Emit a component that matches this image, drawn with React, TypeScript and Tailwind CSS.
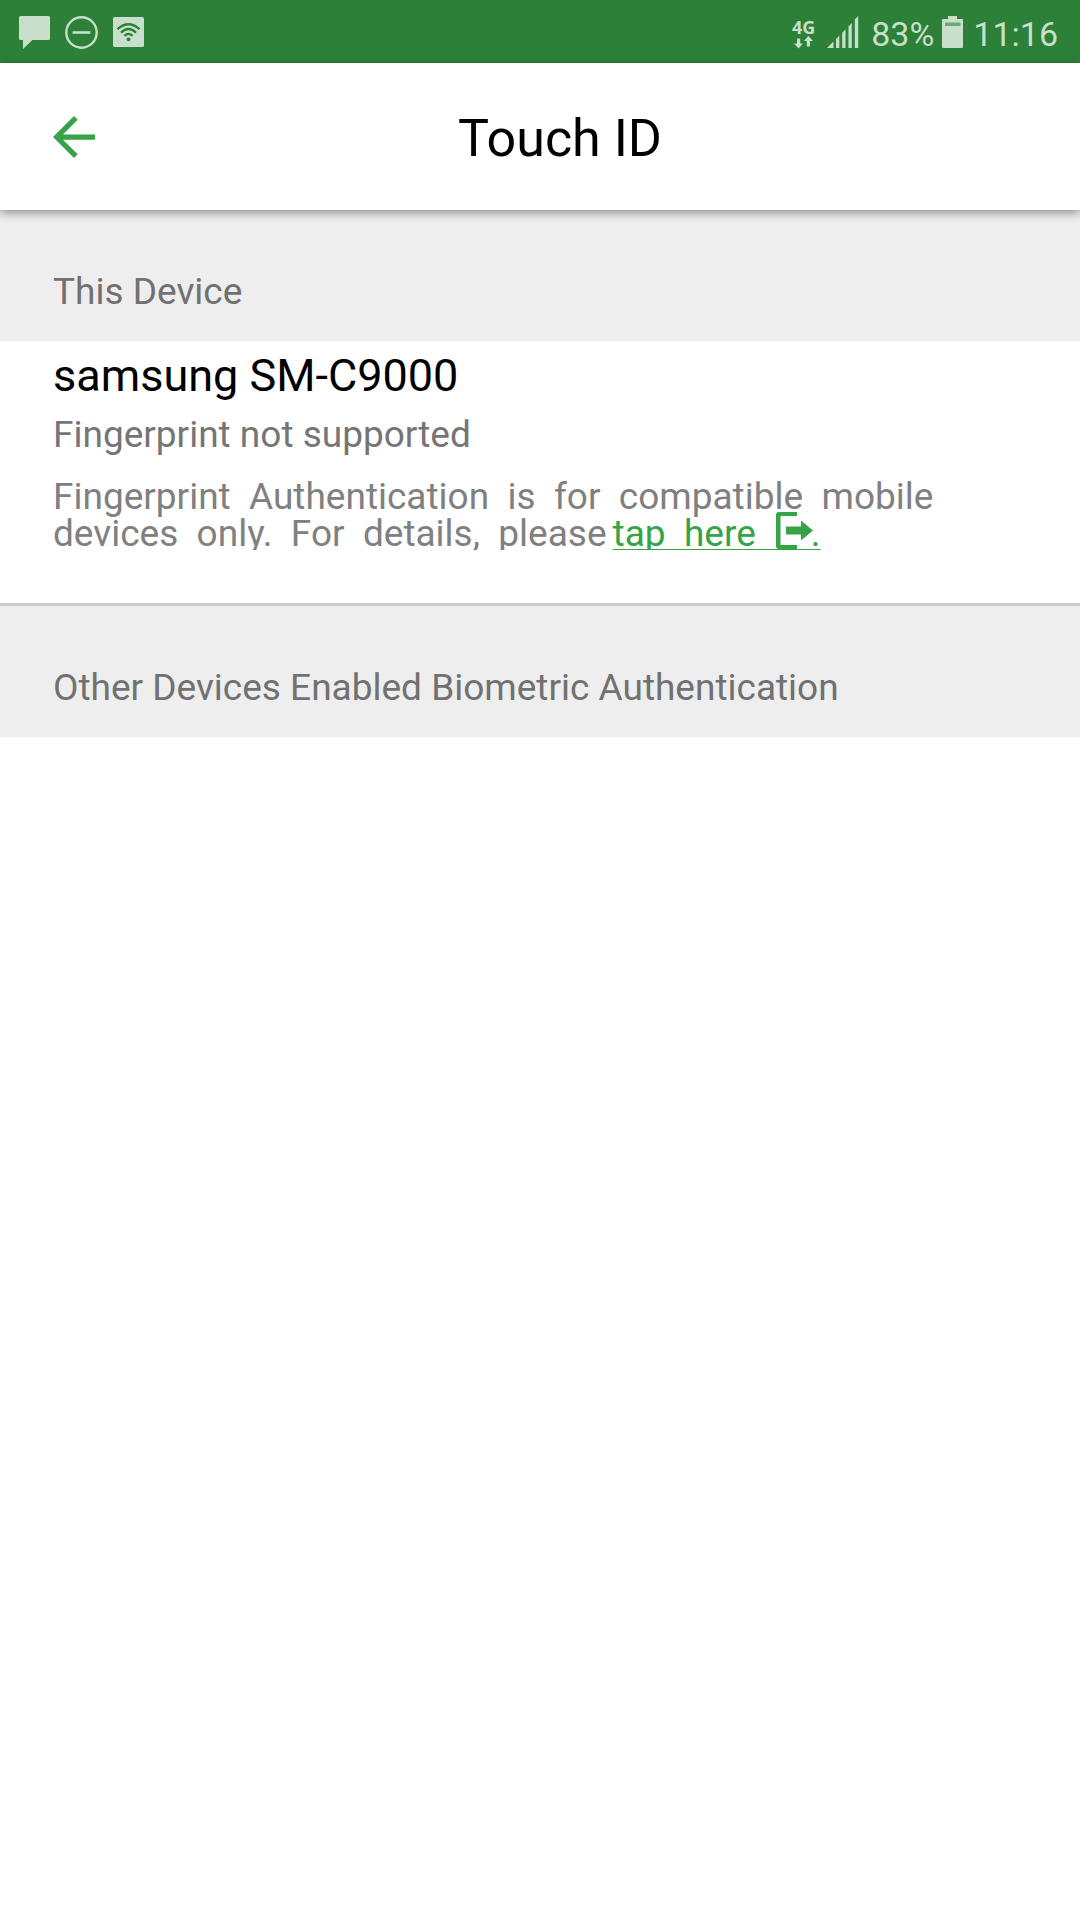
import React from "react";

function StatusBar() {
  return (
    <div className="flex h-[63px] items-center justify-between bg-[#2d8037] pl-[19px] pr-[22px] pt-px text-[#c8dfcb]">
      <div className="flex items-center gap-[15px]">
        <svg className="h-[33px] w-[31px]" viewBox="0 0 31 33" fill="currentColor" aria-hidden="true">
          <path d="M1.500 0H29.500Q31 0 31 1.500V22.500Q31 24 29.500 24H13.500L4 33V24H1.500Q0 24 0 22.500V1.500Q0 0 1.500 0Z" />
        </svg>
        <svg className="h-[33px] w-[33px]" viewBox="0 0 33 33" fill="none" stroke="currentColor" aria-hidden="true">
          <circle cx="16.500" cy="16.500" r="15.200" strokeWidth="2.400" />
          <path d="M7.500 16.500H25.500" strokeWidth="2.600" />
        </svg>
        <svg className="h-[30px] w-[31px]" viewBox="0 0 31 30" aria-hidden="true">
          <rect width="31" height="30" rx="1.500" fill="currentColor" />
          <g fill="none" stroke="#2d8037" strokeWidth="2.300">
            <path d="M4.500 12.200Q15.500 2.200 26.500 12.200" />
            <path d="M8 15.600Q15.500 8.400 23 15.600" />
            <path d="M11.400 18.800Q15.500 15 19.600 18.800" />
          </g>
          <circle cx="15.500" cy="22.300" r="1.900" fill="#2d8037" />
        </svg>
      </div>
      <div className="flex items-center text-[34px] leading-10">
        <div className="flex flex-col items-center pt-0.5">
          <span className="font-['Open_Sans','Noto_Sans',sans-serif] text-[18px] font-bold leading-[18px]">4G</span>
          <svg className="h-[13px] w-[19px]" viewBox="0 0 19 13" fill="currentColor" aria-hidden="true">
            <path d="M3 2.500H6.200V7.500H9L4.600 12.500L0 7.500H3Z" />
            <path d="M12.800 10.500H16V5H19L14.400 0L9.900 5H12.800Z" />
          </svg>
        </div>
        <svg className="ml-3 h-8 w-8" viewBox="0 0 32 32" fill="currentColor" aria-hidden="true">
          <path d="M0 32L6.500 25.500V32Z" />
          <path d="M9 23L12.300 19.500V32H9Z" />
          <path d="M15.200 16.800L18.500 13.300V32H15.200Z" />
          <path d="M21.500 10.500L24.800 7V32H21.500Z" />
          <path d="M27.800 3.500L31.200 0V32H27.800Z" />
        </svg>
        <span className="ml-3 pt-1">83%</span>
        <svg className="ml-2 h-8 w-[21px]" viewBox="0 0 21 32" fill="currentColor" aria-hidden="true">
          <path d="M6 0H15V3H20Q21 3 21 4V31Q21 32 20 32H1Q0 32 0 31V4Q0 3 1 3H6Z" />
          <path d="M3 6.500H18.500V10H3Z" fill="#6fa977" />
        </svg>
        <span className="ml-2.5 pt-1">11:16</span>
      </div>
    </div>
  );
}

function Header() {
  return (
    <header className="relative z-10 flex h-[147px] items-center bg-white pl-[53px] pr-[55px] shadow-[0_3px_9px_rgba(0,0,0,0.4)]">
      <button type="button" aria-label="Back" className="text-[#36a347]">
        <svg className="h-[42px] w-[42px]" viewBox="4 4 16 16" fill="currentColor" aria-hidden="true">
          <path d="M20 11H7.830l5.590-5.590L12 4l-8 8 8 8 1.410-1.410L7.830 13H20v-2z" />
        </svg>
      </button>
      <h1 className="flex-1 pt-1 text-center text-[52px] leading-[64px] text-black">Touch ID</h1>
    </header>
  );
}

function SectionTitle({ children }: { children: React.ReactNode }) {
  return (
    <h2 className="bg-[#eeeeee] px-[53px] pb-[27px] pt-[60px] text-[37px] leading-[44px] text-[#717171]">{children}</h2>
  );
}

export default function App() {
  return (
    <div className="min-h-screen bg-white font-['Roboto',sans-serif]">
      <StatusBar />
      <Header />
      <main>
        <SectionTitle>This Device</SectionTitle>
        <section className="border-b-[3px] border-[#cacaca] px-[53px] pb-[53px] pt-[9px]">
          <h3 className="text-[45px] leading-[52px] text-black">samsung SM-C9000</h3>
          <p className="mt-[11px] text-[37px] leading-[44px] text-[#757575]">Fingerprint not supported</p>
          <div className="mt-[21px] overflow-hidden">
            <p className="-mb-0.5 whitespace-pre-wrap text-[37px] leading-[37px] text-[#808080]">
              {"Fingerprint  Authentication  is  for  compatible  mobile  devices  only.  For  details,  please"}
              <a
                href="#details"
                className="ml-1.5 text-[#36a347] underline decoration-1 underline-offset-3 [text-decoration-skip-ink:none]"
              >
                {"tap  here  "}
                <span className="relative">
                  {"\u00a0\u00a0\u00a0\u00a0"}
                  <svg
                    className="absolute bottom-1.5 left-0.5 h-[37px] w-[37px]"
                    viewBox="0 0 37 37"
                    fill="currentColor"
                    aria-hidden="true"
                  >
                    <path d="M3 0H21V4H4.500V33H21V37H3Q0 37 0 34V3Q0 0 3 0Z" />
                    <path d="M10 14.500H25V8.500L37 18.500L25 28.500V22.500H10Z" />
                  </svg>
                </span>
                .
              </a>
            </p>
          </div>
        </section>
        <SectionTitle>Other Devices Enabled Biometric Authentication</SectionTitle>
      </main>
    </div>
  );
}
